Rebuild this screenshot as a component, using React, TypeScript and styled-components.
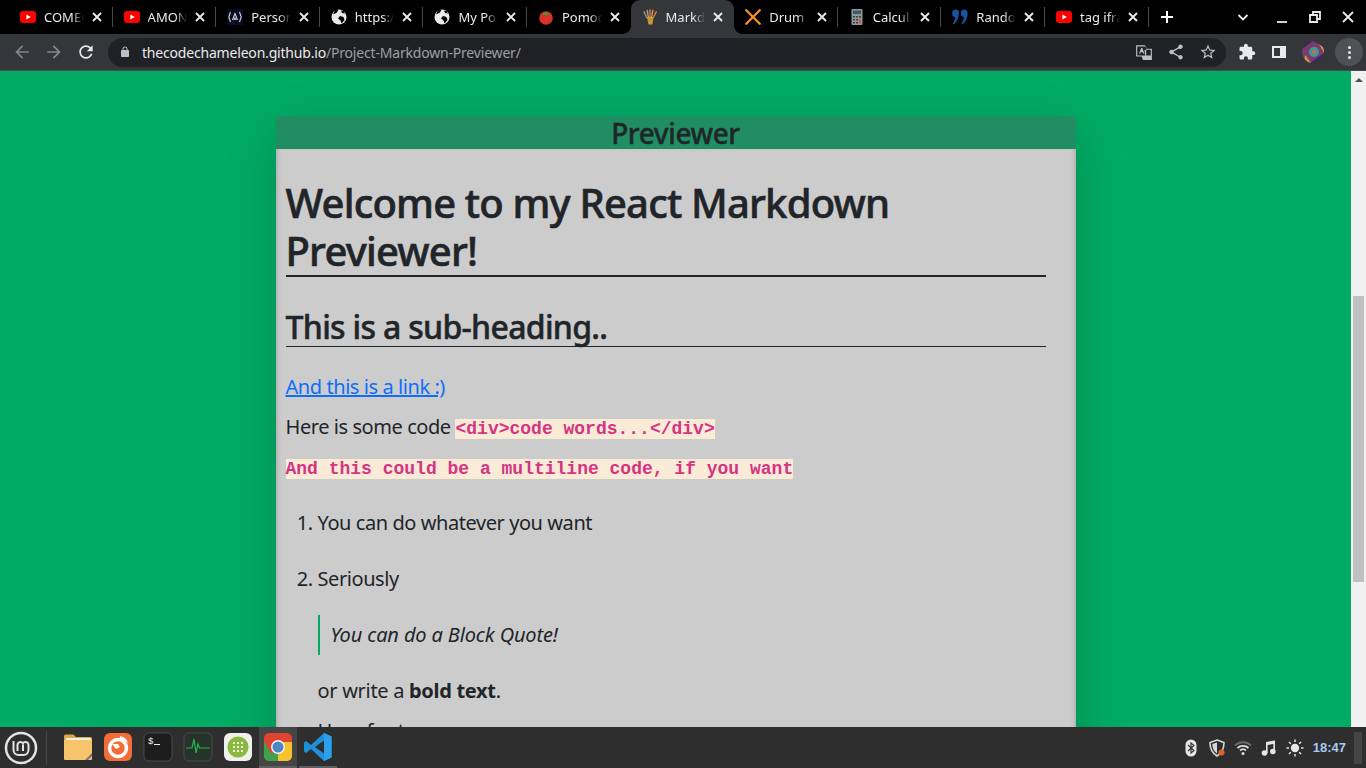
import React from "react";
import styled, { createGlobalStyle } from "styled-components";

const GlobalStyle = createGlobalStyle`
  html, body {
    margin: 0;
    height: 100%;
    overflow: hidden;
    background: #00ab64;
  }
  * { box-sizing: border-box; }
`;

const Shell = styled.div`
  width: 1366px;
  height: 768px;
  display: flex;
  flex-direction: column;
  overflow: hidden;
  font-family: "Noto Sans", "Open Sans", sans-serif;
`;

/* browser chrome */
const TabStrip = styled.div`
  height: 34px;
  flex: none;
  background: #000;
  display: flex;
  align-items: stretch;
  padding-left: 9px;
`;

const Tab = styled.div<{ $active?: boolean; $noDivider?: boolean }>`
  position: relative;
  flex: 0 0 103.6px;
  min-width: 0;
  display: flex;
  align-items: center;
  padding: 0 11px 0 11px;
  background: ${(p) => (p.$active ? "#35363a" : "transparent")};
  border-radius: ${(p) => (p.$active ? "9px 9px 0 0" : "0")};
  &::after {
    content: "";
    display: ${(p) => (p.$noDivider || p.$active ? "none" : "block")};
    position: absolute;
    right: 0;
    top: 7px;
    height: 20px;
    width: 1px;
    background: #4a4a4d;
  }
`;

const Flare = styled.span<{ $side: "left" | "right" }>`
  position: absolute;
  bottom: 0;
  width: 8px;
  height: 8px;
  ${(p) => (p.$side === "left" ? "left: -8px;" : "right: -8px;")}
  background: radial-gradient(
    circle at ${(p) => (p.$side === "left" ? "0 0" : "100% 0")},
    transparent 7.5px,
    #35363a 8px
  );
`;

const TabIcon = styled.span`
  width: 16px;
  height: 16px;
  flex: none;
  margin-right: 8px;
  display: flex;
`;

const TabTitle = styled.span`
  flex: 1;
  min-width: 0;
  overflow: hidden;
  white-space: nowrap;
  font-size: 13px;
  color: #e8eaed;
  -webkit-mask-image: linear-gradient(to right, #000 70%, transparent 100%);
  mask-image: linear-gradient(to right, #000 70%, transparent 100%);
`;

const TabClose = styled.svg`
  width: 10px;
  height: 10px;
  flex: none;
  margin-left: 8px;
  stroke: #e8eaed;
  stroke-width: 1.9;
`;

const NewTab = styled.svg`
  width: 14px;
  height: 14px;
  flex: none;
  margin: 10px 0 0 11px;
  stroke: #fff;
  stroke-width: 2;
`;

const WindowControls = styled.div`
  margin-left: auto;
  display: flex;
  align-items: center;
  padding-right: 12px;
  gap: 21px;
`;

const WinIcon = styled.svg<{ $wide?: boolean }>`
  width: 12px;
  height: 12px;
  margin-right: ${(p) => (p.$wide ? "6px" : "0")};
  stroke: #e8eaed;
  fill: none;
  stroke-width: 1.8;
`;

const Toolbar = styled.div`
  height: 37px;
  flex: none;
  background: #35363a;
  border-bottom: 1px solid #4a4a4c;
  display: flex;
  align-items: center;
  padding: 0 8px 0 12px;
`;

const NavButton = styled.svg<{ $dim?: boolean }>`
  width: 20px;
  height: 20px;
  flex: none;
  margin-right: 12px;
  fill: ${(p) => (p.$dim ? "#85878a" : "#e8eaed")};
`;

const Omnibox = styled.div`
  width: 1118px;
  height: 29px;
  border-radius: 15px;
  background: #202124;
  display: flex;
  align-items: center;
  padding: 0 9px 0 11px;
  flex: none;
`;

const LockIcon = styled.svg`
  width: 12px;
  height: 12px;
  fill: #bdc1c6;
  flex: none;
  margin-right: 11px;
`;

const Url = styled.div`
  flex: 1;
  font-size: 14px;
  letter-spacing: -0.19px;
  color: #9aa0a6;
  white-space: nowrap;
  b {
    font-weight: 400;
    color: #e8eaed;
  }
`;

const OmniIcon = styled.svg`
  width: 18px;
  height: 18px;
  flex: none;
  margin-left: 14px;
  fill: #bdc1c6;
`;

const ToolActions = styled.div`
  display: flex;
  align-items: center;
  margin-left: 12px;
  gap: 14px;
`;

const ToolIcon = styled.svg`
  width: 18px;
  height: 18px;
  fill: #e8eaed;
  flex: none;
`;

const Avatar = styled.svg`
  width: 22px;
  height: 22px;
  flex: none;
  border-radius: 50%;
`;

const MenuButton = styled.div`
  width: 28px;
  height: 28px;
  margin-left: -3px;
  border-radius: 50%;
  background: #505154;
  display: flex;
  flex-direction: column;
  align-items: center;
  justify-content: center;
  gap: 2px;
  span {
    width: 3px;
    height: 3px;
    border-radius: 50%;
    background: #e8eaed;
  }
`;

/* page */
const Viewport = styled.div`
  flex: 1;
  min-height: 0;
  display: flex;
  overflow: hidden;
`;

const Page = styled.div`
  flex: 1;
  background: #00ab64;
  overflow: hidden;
  padding-top: 45px;
  display: flex;
  justify-content: center;
`;

const Scrollbar = styled.div`
  width: 15px;
  flex: none;
  background: #f1f1f1;
  display: flex;
  flex-direction: column;
  align-items: center;
  padding-top: 7px;
`;

const ScrollArrow = styled.div`
  width: 0;
  height: 0;
  border-left: 4px solid transparent;
  border-right: 4px solid transparent;
  border-bottom: 4px solid #505050;
`;

const ScrollThumb = styled.div`
  width: 11px;
  height: 286px;
  margin-top: 214px;
  background: #c1c1c1;
`;

const Panel = styled.div`
  width: 800px;
  height: 900px;
  flex: none;
  box-shadow: 0 16px 48px rgba(0, 0, 0, 0.18);
`;

const PanelHeader = styled.div`
  height: 33px;
  background: #208e62;
  color: #212529;
  text-align: center;
  font-size: 28px;
  line-height: 34px;
  font-weight: 500;
  letter-spacing: -0.4px;
  -webkit-text-stroke: 0.4px #212529;
`;

const PanelBody = styled.div`
  background: #ccc;
  height: 867px;
  padding: 30px 30px 0 10px;
  color: #212529;
  box-shadow: inset 4px 0 5px -3px rgba(0, 0, 0, 0.18), inset -4px 0 5px -3px rgba(0, 0, 0, 0.18);
  font-size: 20px;
  line-height: 24px;
  letter-spacing: -0.43px;
`;

const Title = styled.h1`
  margin: 0 0 31px;
  font-size: 40px;
  line-height: 48px;
  font-weight: 500;
  letter-spacing: -0.82px;
  -webkit-text-stroke: 0.6px #212529;
  border-bottom: 2px solid #212529;
`;

const SubTitle = styled.h2`
  margin: 0 0 28px;
  font-size: 32px;
  line-height: 38px;
  font-weight: 500;
  letter-spacing: -0.7px;
  -webkit-text-stroke: 0.5px #212529;
  border-bottom: 1px solid #212529;
`;

const Paragraph = styled.p`
  margin: 0 0 16px;
`;

const LinkText = styled.a`
  color: #0d6efd;
  text-decoration: underline;
`;

const InlineCode = styled.code`
  font-family: "Liberation Mono", monospace;
  font-size: 18px;
  font-weight: 700;
  letter-spacing: 0;
  background: #faebd7;
  color: #d63384;
`;

const CodeBlock = styled.pre`
  margin: 0 0 30px;
  font-family: "Liberation Mono", monospace;
  font-size: 18px;
  line-height: 24px;
  font-weight: 700;
  letter-spacing: 0;
  color: #d63384;
  span {
    background: #faebd7;
  }
`;

const List = styled.ol`
  margin: 0;
  padding: 0 0 0 32px;
  li {
    margin-bottom: 32px;
  }
`;

const Quote = styled.blockquote`
  margin: 24px 0 0;
  padding: 8px 0 8px 11px;
  border-left: 2px solid #00ab64;
  font-style: italic;
  letter-spacing: -0.13px;
`;

const Tail = styled.p<{ $tight?: boolean }>`
  margin: ${(p) => (p.$tight ? "16px" : "24px")} 0 0;
  letter-spacing: -0.3px;
`;

/* panel at the bottom */
const Taskbar = styled.div`
  height: 41px;
  flex: none;
  background: #2e2e2e;
  display: flex;
  align-items: center;
  padding: 0 4px;
`;

const MintButton = styled.svg`
  width: 34px;
  height: 34px;
  flex: none;
`;

const TaskDivider = styled.div`
  width: 1px;
  height: 34px;
  margin: 0 12px 0 8px;
  background: #454545;
`;

const Launcher = styled.div<{ $active?: boolean; $running?: boolean }>`
  width: 38px;
  height: 41px;
  margin-right: 2px;
  flex: none;
  display: flex;
  align-items: center;
  justify-content: center;
  background: ${(p) => (p.$active ? "#454545" : "transparent")};
  border-bottom: 2px solid ${(p) => (p.$active || p.$running ? "#5e5e5e" : "transparent")};
  svg {
    width: 30px;
    height: 30px;
  }
`;

const Tray = styled.div`
  margin-left: auto;
  display: flex;
  align-items: center;
  gap: 8px;
`;

const TrayIcon = styled.svg`
  width: 18px;
  height: 18px;
  flex: none;
`;

const Clock = styled.div`
  margin-left: 1px;
  font-family: "Liberation Sans", sans-serif;
  font-weight: 700;
  font-size: 13px;
  color: #a8c8ee;
`;

const ShowDesktop = styled.div`
  width: 8px;
  height: 32px;
  background: #454545;
`;

/* icons */
const YouTube = () => (
  <svg viewBox="0 0 16 16" width="16" height="16">
    <rect y="2" width="16" height="12" rx="3" fill="#f00" />
    <path d="M6.4 5.4 10.8 8l-4.4 2.6z" fill="#fff" />
  </svg>
);

const Globe = () => (
  <svg viewBox="0 0 16 16" width="16" height="16">
    <circle cx="8" cy="8" r="7.5" fill="#e8eaed" />
    <path d="M2 5.5 6 3.5l1.5-3L4 1zM9 7l3.5 1 1 3-3 3.5-1-3-2.5-2zM10 1.5l1 2.5 3 .5-1.5-2.5z" fill="#000" />
  </svg>
);

const FccIcon = () => (
  <svg viewBox="0 0 16 16" width="16" height="16">
    <rect width="16" height="16" fill="#0a0a23" />
    <path d="M3.5 3 1.8 8l1.7 5M12.5 3l1.7 5-1.7 5" fill="none" stroke="#d0d0d5" strokeWidth="1.1" />
    <path d="M5.5 11 8 4.5 10.5 11M7 11l1-2 1 2" fill="none" stroke="#d0d0d5" strokeWidth="1.1" />
  </svg>
);

const Tomato = () => (
  <svg viewBox="0 0 16 16" width="16" height="16">
    <circle cx="8" cy="9" r="6.8" fill="#d9302a" />
    <path d="M3.5 4.5C6 5 7 4 8 2.5 9 4 10 5 12.5 4.5 11 6 9.5 6.5 8 6 6.5 6.5 5 6 3.5 4.5z" fill="#3f9b3c" />
  </svg>
);

const MarkdownFavicon = () => (
  <svg viewBox="0 0 16 16" width="16" height="16">
    <path d="M5 8h6.5l-1 7.5H6.5z" fill="#c9952f" />
    <path d="M5 9 1.8 2.5M6.5 8.5 5 .8M8 8.500V.5M9.5 8.500 11 .8M11 9l3.5-6.500" stroke="#d9a441" strokeWidth="1.3" />
    <path d="M3 3.5 5 8M7 2v5" stroke="#3d6fd0" strokeWidth="1" />
    <path d="M9 2 8.8 7M13 4 11 8" stroke="#c8403a" strokeWidth="1" />
  </svg>
);

const DrumX = () => (
  <svg viewBox="0 0 16 16" width="16" height="16">
    <path d="M.5.5 15.5 15.5M15.5.5.5 15.5" stroke="#f7931e" strokeWidth="2.2" />
  </svg>
);

const Calculator = () => (
  <svg viewBox="0 0 16 16" width="16" height="16">
    <rect x="2.5" width="11" height="16" rx="1" fill="#8f979c" />
    <rect x="4" y="1.5" width="8" height="3.5" fill="#3d5a66" />
    <path d="M4 7h2v1.5H4zM7 7h2v1.5H7zM10 7h2v1.5h-2zM4 10h2v1.5H4zM7 10h2v1.5H7zM4 13h2v1.5H4zM7 13h2v1.5H7z" fill="#3a4045" />
    <path d="M10 10h2v4.5h-2z" fill="#d05a3c" />
  </svg>
);

const Quotes = () => (
  <svg viewBox="0 0 16 16" width="16" height="16" fill="#1f4f9e">
    <path d="M3.6.5a3.4 3.4 0 0 1 3.3 3.7c0 5-2.4 8.7-5.3 11.3L.6 14.7c1.4-1.8 2.3-3.7 2.5-6.5A3.8 3.8 0 0 1 .2 4.1 3.5 3.5 0 0 1 3.6.5z" />
    <path d="M12.2.5a3.4 3.4 0 0 1 3.4 3.7c0 5-2.4 8.7-5.3 11.3l-1-.8c1.4-1.8 2.3-3.7 2.5-6.500a3.8 3.8 0 0 1-2.9-4.100A3.5 3.5 0 0 1 12.2.5z" />
  </svg>
);

const tabs: { title: string; icon: React.ReactNode; active?: boolean; noDivider?: boolean }[] = [
  { title: "COMECE AGORA", icon: <YouTube /> },
  { title: "AMONG US", icon: <YouTube /> },
  { title: "Personal Library", icon: <FccIcon /> },
  { title: "https://example", icon: <Globe /> },
  { title: "My Portfolio", icon: <Globe /> },
  { title: "Pomodoro Clock", icon: <Tomato />, noDivider: true },
  { title: "Markdown Previewer", icon: <MarkdownFavicon />, active: true },
  { title: "Drum Machine", icon: <DrumX /> },
  { title: "Calculator", icon: <Calculator /> },
  { title: "Random Quote", icon: <Quotes /> },
  { title: "tag iframe", icon: <YouTube /> },
];

const App: React.FC = () => {
  return (
    <Shell>
      <GlobalStyle />
      <TabStrip>
        {tabs.map((tab) => (
          <Tab key={tab.title} $active={tab.active} $noDivider={tab.noDivider}>
            {tab.active && <Flare $side="left" />}
            <TabIcon>{tab.icon}</TabIcon>
            <TabTitle>{tab.title}</TabTitle>
            <TabClose viewBox="0 0 10 10">
              <path d="M1 1l8 8M9 1 1 9" />
            </TabClose>
            {tab.active && <Flare $side="right" />}
          </Tab>
        ))}
        <NewTab viewBox="0 0 14 14">
          <path d="M7 1v12M1 7h12" />
        </NewTab>
        <WindowControls>
          <WinIcon $wide viewBox="0 0 12 12">
            <path d="M1.5 4l4.5 4.5L10.5 4" />
          </WinIcon>
          <WinIcon viewBox="0 0 12 12">
            <path d="M1 11h10" />
          </WinIcon>
          <WinIcon viewBox="0 0 12 12">
            <path d="M1 4h7v7H1zM4 4V1h7v7H8" />
          </WinIcon>
          <WinIcon viewBox="0 0 12 12">
            <path d="M1 1l10 10M11 1 1 11" />
          </WinIcon>
        </WindowControls>
      </TabStrip>

      <Toolbar>
        <NavButton $dim viewBox="0 0 24 24">
          <path d="M20 11H7.83l5.59-5.59L12 4l-8 8 8 8 1.41-1.41L7.83 13H20v-2z" />
        </NavButton>
        <NavButton $dim viewBox="0 0 24 24">
          <path d="M4 11h12.17l-5.59-5.59L12 4l8 8-8 8-1.41-1.41L16.17 13H4v-2z" />
        </NavButton>
        <NavButton viewBox="0 0 24 24">
          <path d="M17.65 6.35C16.2 4.9 14.21 4 12 4c-4.42 0-7.99 3.58-7.99 8s3.57 8 7.99 8c3.73 0 6.84-2.55 7.73-6h-2.08c-.82 2.33-3.04 4-5.65 4-3.31 0-6-2.69-6-6s2.69-6 6-6c1.66 0 3.14.69 4.22 1.78L13 11h7V4l-2.35 2.35z" />
        </NavButton>
        <Omnibox>
          <LockIcon viewBox="0 0 24 24">
            <path d="M18 8h-1V6c0-2.76-2.24-5-5-5S7 3.24 7 6v2H6c-1.1 0-2 .9-2 2v10c0 1.1.9 2 2 2h12c1.1 0 2-.9 2-2V10c0-1.1-.9-2-2-2zM9 6c0-1.66 1.34-3 3-3s3 1.34 3 3v2H9V6z" />
          </LockIcon>
          <Url>
            <b>thecodechameleon.github.io</b>/Project-Markdown-Previewer/
          </Url>
          <OmniIcon viewBox="0 0 16 16">
            <path d="M1 2h8l1 3h5v10H7l-1-3H1zm1 1v8h8V3zm3.5 1.5h1l2 5h-1l-.5-1.2H5l-.5 1.2h-1zM8.5 6l.6 5H14V6z" fillRule="evenodd" />
          </OmniIcon>
          <OmniIcon viewBox="0 0 24 24">
            <path d="M18 16.08c-.76 0-1.44.3-1.96.77L8.91 12.7c.05-.23.09-.46.09-.7s-.04-.47-.09-.7l7.05-4.11c.54.5 1.25.81 2.04.81 1.66 0 3-1.34 3-3s-1.34-3-3-3-3 1.34-3 3c0 .24.04.47.09.7L8.04 9.81C7.5 9.31 6.79 9 6 9c-1.66 0-3 1.34-3 3s1.34 3 3 3c.79 0 1.5-.31 2.04-.81l7.12 4.16c-.05.21-.08.43-.08.65 0 1.61 1.31 2.92 2.92 2.92s2.92-1.31 2.92-2.92-1.31-2.92-2.92-2.92z" />
          </OmniIcon>
          <OmniIcon viewBox="0 0 24 24">
            <path d="M22 9.24l-7.19-.62L12 2 9.19 8.63 2 9.24l5.46 4.73L5.82 21 12 17.27 18.18 21l-1.63-7.03L22 9.24zM12 15.4l-3.76 2.27 1-4.28-3.32-2.88 4.38-.38L12 6.1l1.71 4.04 4.38.38-3.32 2.88 1 4.28L12 15.4z" />
          </OmniIcon>
        </Omnibox>
        <ToolActions>
          <ToolIcon viewBox="0 0 24 24">
            <path d="M20.5 11H19V7c0-1.1-.9-2-2-2h-4V3.5C13 2.12 11.88 1 10.5 1S8 2.12 8 3.5V5H4c-1.1 0-1.99.9-1.99 2v3.8H3.5c1.49 0 2.7 1.21 2.7 2.7s-1.21 2.7-2.7 2.7H2V20c0 1.1.9 2 2 2h3.8v-1.5c0-1.49 1.21-2.7 2.7-2.7 1.49 0 2.7 1.21 2.7 2.7V22H17c1.1 0 2-.9 2-2v-4h1.5c1.38 0 2.5-1.12 2.5-2.5S21.88 11 20.5 11z" />
          </ToolIcon>
          <ToolIcon viewBox="0 0 18 18">
            <path d="M2 3h14v12H2zm2 2v8h6V5z" fillRule="evenodd" />
          </ToolIcon>
          <Avatar viewBox="0 0 22 22">
            <rect width="22" height="22" fill="#3a2a55" />
            <path d="M0 8 11 0l11 6v6L8 22H0z" fill="#7a3c6e" />
            <circle cx="12" cy="11" r="5" fill="#3e9a9a" />
            <circle cx="12" cy="11" r="2" fill="#d0703a" />
            <path d="M3 14l6 8H2zM17 3l5 4v5z" fill="#c9a03c" />
          </Avatar>
          <MenuButton>
            <span />
            <span />
            <span />
          </MenuButton>
        </ToolActions>
      </Toolbar>

      <Viewport>
        <Page>
          <Panel>
            <PanelHeader>Previewer</PanelHeader>
            <PanelBody>
              <Title>Welcome to my React Markdown Previewer!</Title>
              <SubTitle>This is a sub-heading..</SubTitle>
              <Paragraph>
                <LinkText href="#">And this is a link :)</LinkText>
              </Paragraph>
              <Paragraph>
                Here is some code <InlineCode>&lt;div&gt;code words...&lt;/div&gt;</InlineCode>
              </Paragraph>
              <CodeBlock>
                <span>And this could be a multiline code, if you want</span>
              </CodeBlock>
              <List>
                <li>You can do whatever you want</li>
                <li>
                  Seriously
                  <Quote>You can do a Block Quote!</Quote>
                  <Tail>
                    or write a <strong>bold text</strong>.
                  </Tail>
                  <Tail $tight>Here for tea</Tail>
                </li>
              </List>
            </PanelBody>
          </Panel>
        </Page>
        <Scrollbar>
          <ScrollArrow />
          <ScrollThumb />
        </Scrollbar>
      </Viewport>

      <Taskbar>
        <MintButton viewBox="0 0 34 34">
          <circle cx="17" cy="17" r="15" fill="none" stroke="#e4e4e4" strokeWidth="2.5" />
          <path d="M9.5 10v9a5 5 0 0 0 5 5h5a5 5 0 0 0 5-5v-5a3 3 0 0 0-5.500-1.700A3 3 0 0 0 13.500 14v6M19 13.500V20" fill="none" stroke="#e4e4e4" strokeWidth="2" />
        </MintButton>
        <TaskDivider />
        <Launcher>
          <svg viewBox="0 0 30 30">
            <path d="M1 4a1.5 1.5 0 0 1 1.5-1.5h8L13 5h14.5A1.5 1.5 0 0 1 29 6.5V27H1z" fill="#d9a94f" />
            <path d="M1 8h28v19a1 1 0 0 1-1 1H2a1 1 0 0 1-1-1z" fill="#f7c46c" />
            <path d="M3 6h25v2H3z" fill="#f4efe4" />
            <path d="M22 28l7-7v3l-4 4z" fill="#777" />
          </svg>
        </Launcher>
        <Launcher>
          <svg viewBox="0 0 30 30">
            <rect x="1" y="1" width="28" height="28" rx="6" fill="#f26d38" />
            <circle cx="15" cy="16" r="8.5" fill="none" stroke="#fff" strokeWidth="3.5" />
            <path d="M17 4c4 1 7 3 8 7-2-2-5-3-8-3zM9 12h6l2 3-4 2z" fill="#fff" />
          </svg>
        </Launcher>
        <Launcher>
          <svg viewBox="0 0 30 30">
            <rect x="1" y="1" width="28" height="28" rx="5" fill="#1d1d1d" stroke="#4a4a4a" />
            <text x="5" y="12" fontSize="9" fill="#eee" fontFamily="Liberation Mono">$</text>
            <path d="M11 12h6v1h-6z" fill="#eee" />
          </svg>
        </Launcher>
        <Launcher>
          <svg viewBox="0 0 30 30">
            <rect x="1" y="1" width="28" height="28" rx="5" fill="#26332a" stroke="#4a4a4a" />
            <path d="M3 16h6l2-9 2 14 2-9 1.5 4H27" fill="none" stroke="#28b44a" strokeWidth="1.2" />
          </svg>
        </Launcher>
        <Launcher>
          <svg viewBox="0 0 30 30">
            <rect x="1" y="1" width="28" height="28" rx="6" fill="#efefeb" />
            <circle cx="15" cy="15" r="10.5" fill="#8bb83f" />
            <path d="M10 10h2v2h-2zM14 10h2v2h-2zM18 10h2v2h-2zM10 14h2v2h-2zM14 14h2v2h-2zM18 14h2v2h-2zM10 18h2v2h-2zM14 18h2v2h-2zM18 18h2v2h-2z" fill="#eef4df" />
          </svg>
        </Launcher>
        <Launcher $active>
          <svg viewBox="0 0 30 30">
            <rect x="1" y="1" width="28" height="28" rx="5" fill="#e0432f" />
            <path d="M1 9 8 21l7 8H6a5 5 0 0 1-5-5z" fill="#3fa34d" />
            <path d="M29 10H15l-1 8 1 11h9a5 5 0 0 0 5-5z" fill="#f6c22d" />
            <path d="M15 29 8 21l7-2z" fill="#3fa34d" />
            <circle cx="15" cy="15" r="7" fill="#f2f2f2" />
            <circle cx="15" cy="15" r="5.5" fill="#4e86c8" />
          </svg>
        </Launcher>
        <Launcher $running>
          <svg viewBox="0 0 30 30">
            <path d="M21 1l7.5 3.5v21L21 29 8 17l-5 4-2-1.5V10.500L3 9l5 4z" fill="#1f8fdc" />
            <path d="M21 8.5 12 15l9 6.5z" fill="#2e2e2e" />
            <path d="M21 1l7.5 3.5v21L21 29z" fill="#2aa0ee" />
          </svg>
        </Launcher>
        <Tray>
          <TrayIcon viewBox="0 0 18 18">
            <rect x="3.5" y="0.5" width="11" height="17" rx="5.5" fill="#e6e6e6" />
            <path d="M6 6l6 5.5L9 14V4l3 2.5L6 12" fill="none" stroke="#2e2e2e" strokeWidth="1.1" />
          </TrayIcon>
          <TrayIcon viewBox="0 0 18 18">
            <path d="M9 1l7 2.5c0 6-2 10.5-7 13.5-5-3-7-7.5-7-13.5z" fill="none" stroke="#d8d8d8" strokeWidth="1.6" />
            <path d="M9 3.5v11C6 12.5 4.5 9.5 4.3 5z" fill="#d8d8d8" />
            <circle cx="13.5" cy="13.5" r="3" fill="#e0622a" />
          </TrayIcon>
          <TrayIcon viewBox="0 0 18 18">
            <path d="M1 6.5a11.5 11.5 0 0 1 16 0" fill="none" stroke="#6a6a6a" strokeWidth="1.8" />
            <path d="M3.5 9a8 8 0 0 1 11 0" fill="none" stroke="#e0e0e0" strokeWidth="1.8" />
            <path d="M6 11.5a4.5 4.5 0 0 1 6 0" fill="none" stroke="#e0e0e0" strokeWidth="1.8" />
            <circle cx="9" cy="14.5" r="1.5" fill="#e0e0e0" />
          </TrayIcon>
          <TrayIcon viewBox="0 0 18 18">
            <path d="M6 3l9-1.5V12h-1.6V5L7.6 6v8H6z" fill="#e6e6e6" />
            <circle cx="4.5" cy="14" r="2.8" fill="#e6e6e6" />
            <circle cx="12.8" cy="12.5" r="2.8" fill="#e6e6e6" />
          </TrayIcon>
          <TrayIcon viewBox="0 0 18 18">
            <circle cx="9" cy="9" r="4.2" fill="#e6e6e6" />
            <path d="M9 .5V3M9 15v2.5M.5 9H3M15 9h2.5M3 3l1.8 1.800M13.200 13.200 15 15M3 15l1.800-1.800M13.200 4.800 15 3" stroke="#e6e6e6" strokeWidth="1.5" />
          </TrayIcon>
          <Clock>18:47</Clock>
          <ShowDesktop />
        </Tray>
      </Taskbar>
    </Shell>
  );
};

export default App;
